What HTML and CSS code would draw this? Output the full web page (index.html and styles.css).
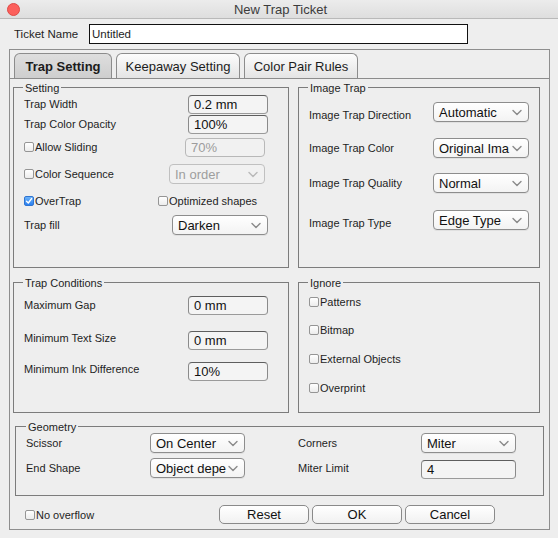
FILE: index.html
```html
<!DOCTYPE html>
<html>
<head>
<meta charset="utf-8">
<title>New Trap Ticket</title>
<link rel="stylesheet" href="styles.css">
</head>
<body>
<div class="titlebar">
  <span class="close"></span>
  <span class="title">New Trap Ticket</span>
  <span class="spacer"></span>
</div>
<div class="ticket-row">
  <span class="ticket-label">Ticket Name</span>
  <div class="ticket-input">Untitled</div>
</div>
<div class="tabpane">
  <div class="tabs">
    <div class="tab tab-1 selected">Trap Setting</div>
    <div class="tab tab-2">Keepaway Setting</div>
    <div class="tab tab-3">Color Pair Rules</div>
  </div>
  <div class="content">
    <div class="groups">
      <div class="group setting">
        <span class="gtitle">Setting</span>
        <div class="row r-s1"><span>Trap Width</span><div class="field w80">0.2 mm</div></div>
        <div class="row r-s2"><span>Trap Color Opacity</span><div class="field w80">100%</div></div>
        <div class="row r-s3"><label class="check"><span class="box"></span>Allow Sliding</label><div class="field w80 disabled shift3">70%</div></div>
        <div class="row r-s4"><label class="check"><span class="box"></span>Color Sequence</label><div class="select w96 disabled shift3"><span class="val">In order</span><svg class="chev" width="10" height="7" viewBox="0 0 10 7"><polyline points="1,1.5 5,5.5 9,1.5"/></svg></div></div>
        <div class="row r-s5"><label class="check overtrap"><span class="box checked"><svg width="8" height="8" viewBox="0 0 8 8"><polyline points="1.5,4.2 3.3,6 6.6,1.6"/></svg></span>OverTrap</label><label class="check"><span class="box"></span>Optimized shapes</label></div>
        <div class="row r-s6"><span>Trap fill</span><div class="select w96"><span class="val">Darken</span><svg class="chev" width="10" height="7" viewBox="0 0 10 7"><polyline points="1,1.5 5,5.5 9,1.5"/></svg></div></div>
      </div>
      <div class="group imagetrap">
        <span class="gtitle">Image Trap</span>
        <div class="row r-i1"><span class="lo">Image Trap Direction</span><div class="select w96"><span class="val">Automatic</span><svg class="chev" width="10" height="7" viewBox="0 0 10 7"><polyline points="1,1.5 5,5.5 9,1.5"/></svg></div></div>
        <div class="row r-i2"><span>Image Trap Color</span><div class="select w96"><span class="val">Original Ima</span><svg class="chev" width="10" height="7" viewBox="0 0 10 7"><polyline points="1,1.5 5,5.5 9,1.5"/></svg></div></div>
        <div class="row r-i3"><span>Image Trap Quality</span><div class="select w96"><span class="val">Normal</span><svg class="chev" width="10" height="7" viewBox="0 0 10 7"><polyline points="1,1.5 5,5.5 9,1.5"/></svg></div></div>
        <div class="row r-i4"><span class="lo">Image Trap Type</span><div class="select w96"><span class="val">Edge Type</span><svg class="chev" width="10" height="7" viewBox="0 0 10 7"><polyline points="1,1.5 5,5.5 9,1.5"/></svg></div></div>
      </div>
      <div class="group conditions">
        <span class="gtitle">Trap Conditions</span>
        <div class="row r-c1"><span>Maximum Gap</span><div class="field w80">0 mm</div></div>
        <div class="row r-c2"><span class="hi">Minimum Text Size</span><div class="field w80">0 mm</div></div>
        <div class="row r-c3"><span class="hi">Minimum Ink Difference</span><div class="field w80">10%</div></div>
      </div>
      <div class="group ignore">
        <span class="gtitle">Ignore</span>
        <div class="crow r-g1"><label class="check"><span class="box"></span>Patterns</label></div>
        <div class="crow r-g2"><label class="check"><span class="box"></span>Bitmap</label></div>
        <div class="crow r-g3"><label class="check"><span class="box"></span>External Objects</label></div>
        <div class="crow r-g4"><label class="check"><span class="box"></span>Overprint</label></div>
      </div>
    </div>
    <div class="group geometry">
      <span class="gtitle">Geometry</span>
      <div class="geo-grid">
        <span>Scissor</span>
        <div class="select w95"><span class="val">On Center</span><svg class="chev" width="10" height="7" viewBox="0 0 10 7"><polyline points="1,1.5 5,5.5 9,1.5"/></svg></div>
        <span>Corners</span>
        <div class="select w95"><span class="val">Miter</span><svg class="chev" width="10" height="7" viewBox="0 0 10 7"><polyline points="1,1.5 5,5.5 9,1.5"/></svg></div>
        <span>End Shape</span>
        <div class="select w95"><span class="val">Object depe</span><svg class="chev" width="10" height="7" viewBox="0 0 10 7"><polyline points="1,1.5 5,5.5 9,1.5"/></svg></div>
        <span>Miter Limit</span>
        <div class="field w95 low">4</div>
      </div>
    </div>
    <div class="footer">
      <label class="check"><span class="box"></span>No overflow</label>
      <div class="buttons">
        <div class="btn">Reset</div>
        <div class="btn">OK</div>
        <div class="btn">Cancel</div>
      </div>
    </div>
  </div>
</div>
</body>
</html>
```
FILE: styles.css
```css
* { box-sizing: border-box; }
html, body { margin: 0; padding: 0; }
body {
  width: 558px;
  height: 538px;
  overflow: hidden;
  background: #eeeeee;
  font-family: "Liberation Sans", Arial, sans-serif;
  font-size: 11px;
  color: #1e1e1e;
}

/* title bar */
.titlebar {
  height: 19px;
  display: flex;
  align-items: center;
  background: linear-gradient(#ececec, #dedede);
  border-bottom: 1px solid #b9b9b9;
}
.close {
  width: 13px;
  height: 13px;
  margin-left: 7px;
  border-radius: 50%;
  background: #fc605c;
  border: 1px solid #df4a46;
  flex: none;
}
.spacer { width: 20px; flex: none; }
.title {
  flex: 1;
  text-align: center;
  font-size: 13px;
  color: #3c3c3c;
  padding-left: 3px;
}

/* ticket name */
.ticket-row {
  display: flex;
  align-items: center;
  height: 20px;
  margin-top: 5px;
  padding-left: 14px;
}
.ticket-label { width: 75px; font-size: 11.5px; }
.ticket-input {
  width: 379px;
  height: 20px;
  border: 1px solid #111;
  background: #fff;
  font-size: 11.5px;
  padding-left: 2px;
  display: flex;
  align-items: center;
}

/* tab pane */
.tabpane {
  margin: 5px 0 0 9px;
  width: 541px;
  height: 481px;
  border: 1px solid #8e8e8e;
}
.tabs {
  display: flex;
  gap: 4px;
  height: 28px;
  padding: 3px 0 0 4px;
}
.tab {
  height: 25px;
  border: 1px solid #8c8c8c;
  border-bottom: none;
  border-radius: 6px 6px 0 0;
  background: linear-gradient(#fcfcfc, #e4e4e4);
  display: flex;
  align-items: center;
  justify-content: center;
  font-size: 13px;
  color: #1c1c1c;
  padding-top: 1px;
}
.tab.selected {
  background: linear-gradient(#dedede, #cecece);
  font-weight: bold;
}
.tab-1 { width: 98px; }
.tab-2 { width: 124px; }
.tab-3 { width: 114px; }

.content {
  border-top: 1px solid #8c8c8c;
  padding: 8px 9px 0 3px;
}

.groups {
  display: grid;
  grid-template-columns: 276px 242px;
  grid-template-rows: 181px 131px;
  column-gap: 9px;
  row-gap: 14px;
}
.group {
  border: 1px solid #7c7c7c;
  display: flex;
  flex-direction: column;
}
.gtitle {
  align-self: flex-start;
  margin: -7px 0 0 9px;
  padding: 0 2px;
  height: 14px;
  line-height: 14px;
  background: #eeeeee;
}

.row {
  display: flex;
  align-items: center;
  justify-content: space-between;
  height: 20px;
  padding: 0 20px 0 10px;
}
.imagetrap .row { padding: 0 10px 0 10px; }

.r-s1 { margin-top: -1px; }
.r-s2 { margin-top: 0; }
.r-s3 { margin-top: 3px; }
.r-s4 { margin-top: 7px; }
.r-s5 { margin-top: 7px; justify-content: flex-start; }
.r-s6 { margin-top: 4px; }
.overtrap { width: 134px; }

.r-i1 { margin-top: 7px; }
.r-i2 { margin-top: 16px; }
.r-i3 { margin-top: 15px; }
.r-i4 { margin-top: 17px; }
.lo { margin-top: 5px; }
.hi { margin-top: -4px; }

.r-c1 { margin-top: 5px; }
.r-c2 { margin-top: 15px; }
.r-c3 { margin-top: 11px; }

.crow {
  display: flex;
  align-items: center;
  height: 16px;
  padding-left: 10px;
}
.r-g1 { margin-top: 4px; }
.r-g2 { margin-top: 12px; }
.r-g3 { margin-top: 13px; }
.r-g4 { margin-top: 13px; }

/* controls */
.field {
  height: 19px;
  border: 1px solid #6c6c6c;
  border-color: #5e5e5e #8a8a8a #9a9a9a #8a8a8a;
  border-radius: 4px;
  background: #f4f4f4;
  font-size: 13px;
  color: #111;
  padding-left: 5px;
  display: flex;
  align-items: center;
}
.field.disabled {
  border-color: #b8b8b8;
  color: #9c9c9c;
  background: #f1f1f1;
}
.w80 { width: 80px; }
.w95 { width: 95px; }
.w96 { width: 96px; }
.shift3 { margin-right: 3px; }
.low { margin-top: 3px; }

.select {
  height: 20px;
  border: 1px solid #8d8d8d;
  border-radius: 4px;
  background: linear-gradient(#ffffff, #f3f3f3);
  box-shadow: 0 1px 0 rgba(0,0,0,0.06);
  display: flex;
  align-items: center;
  padding: 0 6px 0 5px;
  font-size: 13px;
  color: #111;
}
.select .val {
  flex: 1;
  white-space: nowrap;
  margin-right: 2px;
}
.chev { flex: none; }
.chev polyline {
  fill: none;
  stroke: #8a8a8a;
  stroke-width: 1.4;
  stroke-linecap: round;
  stroke-linejoin: round;
}
.select.disabled {
  border-color: #c0c0c0;
  color: #9e9e9e;
  background: #f1f1f1;
  box-shadow: none;
}
.select.disabled .chev polyline { stroke: #b8b8b8; }

.check {
  display: flex;
  align-items: center;
  white-space: nowrap;
}
.box {
  width: 10px;
  height: 10px;
  margin-right: 1px;
  border: 1px solid #959595;
  border-radius: 2px;
  background: linear-gradient(#ffffff, #ececec);
  display: flex;
  align-items: center;
  justify-content: center;
  flex: none;
}
.box.checked {
  background: linear-gradient(#6cb3fa, #2a7ff0);
  border-color: #2f74d0;
}
.box.checked polyline {
  fill: none;
  stroke: #fff;
  stroke-width: 1.4;
  stroke-linecap: round;
  stroke-linejoin: round;
}

/* geometry */
.geometry {
  margin: 13px 0 0 2px;
  width: 529px;
  height: 70px;
}
.geometry .gtitle { margin-left: 10px; }
.geo-grid {
  margin-top: -1px;
  padding-left: 10px;
  display: grid;
  grid-template-columns: 124px 148px 123px 95px;
  grid-template-rows: 20px 20px;
  row-gap: 5px;
  align-items: center;
}

/* footer */
.footer {
  display: flex;
  align-items: center;
  height: 19px;
  margin-top: 9px;
  padding-left: 12px;
}
.buttons {
  margin-left: auto;
  margin-right: 45px;
  display: flex;
  gap: 3px;
}
.btn {
  width: 90px;
  height: 19px;
  border: 1px solid #8a8a8a;
  border-radius: 5px;
  background: linear-gradient(#ffffff, #f1f1f1);
  display: flex;
  align-items: center;
  justify-content: center;
  font-size: 13px;
  color: #111;
}
```
